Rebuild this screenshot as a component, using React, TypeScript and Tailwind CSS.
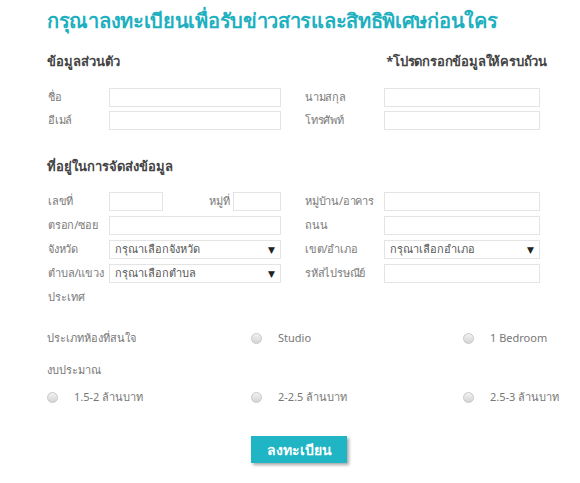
import React from "react";

function Field({ label, w, select }: { label?: string; w: string; select?: string }) {
  return (
    <div className="flex items-center">
      {label !== undefined && (
        <span className="w-[61px] whitespace-nowrap text-[11px] tracking-[-0.2px] text-[#7a7a7a]">{label}</span>
      )}
      <div
        className={`${w} h-[19px] border border-[#e4e4e4] bg-white flex items-center justify-between px-[5px]`}
      >
        {select && (
          <>
            <span className="whitespace-nowrap text-[11px] text-[#555]">{select}</span>
            <span className="text-[9px] text-[#222]">▼</span>
          </>
        )}
      </div>
    </div>
  );
}

function Row({
  left,
  rightLabel,
  rightSelect,
}: {
  left: React.ReactNode;
  rightLabel: string;
  rightSelect?: string;
}) {
  return (
    <div className="flex h-[19px] items-center">
      <div className="w-[233px]">{left}</div>
      <div className="ml-[24px] flex items-center">
        <span className="w-[79px] whitespace-nowrap text-[11px] tracking-[-0.2px] text-[#7a7a7a]">{rightLabel}</span>
        <Field w="w-[156px]" select={rightSelect} />
      </div>
    </div>
  );
}

function Radio({ text, w }: { text: string; w: string }) {
  return (
    <label className={`${w} flex items-center`}>
      <span className="w-[11px] h-[11px] shrink-0 rounded-full border border-[#c8c8c8] bg-gradient-to-b from-[#f2f2f2] to-[#d4d4d4]" />
      <span className="ml-[16px] whitespace-nowrap text-[11px] text-[#777]">{text}</span>
    </label>
  );
}

export default function App() {
  return (
    <div
      className="w-[580px] h-[483px] bg-white pl-[47px]"
      style={{ fontFamily: '"Noto Sans", "DejaVu Sans", sans-serif' }}
    >
      <div className="h-[42px] flex items-center">
        <h1 className="text-[20px] font-bold text-[#1eb0c0] tracking-[-0.3px]">
          กรุณาลงทะเบียนเพื่อรับข่าวสารและสิทธิพิเศษก่อนใคร
        </h1>
      </div>
      <div className="h-[40px] w-[500px] flex items-center justify-between">
        <span className="text-[13px] font-bold text-[#444]">ข้อมูลส่วนตัว</span>
        <span className="text-[13px] font-bold text-[#444] tracking-[-0.2px]">*โปรดกรอกข้อมูลให้ครบถ้วน</span>
      </div>

      <div className="mt-[6px] flex flex-col gap-[4px] pl-[1px]">
        <Row left={<Field label="ชื่อ" w="w-[172px]" />} rightLabel="นามสกุล" />
        <Row left={<Field label="อีเมล์" w="w-[172px]" />} rightLabel="โทรศัพท์" />
      </div>

      <div className="mt-[25px] h-[24px] flex items-center">
        <span className="text-[13px] font-bold text-[#444]">ที่อยู่ในการจัดส่งข้อมูล</span>
      </div>

      <div className="mt-[13px] flex flex-col gap-[5px] pl-[1px]">
        <Row
          left={
            <div className="flex items-center">
              <Field label="เลขที่" w="w-[54px]" />
              <span className="w-[70px] pr-[3px] text-right text-[11px] text-[#7a7a7a]">หมู่ที่</span>
              <Field w="w-[48px]" />
            </div>
          }
          rightLabel="หมู่บ้าน/อาคาร"
        />
        <Row left={<Field label="ตรอก/ซอย" w="w-[172px]" />} rightLabel="ถนน" />
        <Row
          left={<Field label="จังหวัด" w="w-[172px]" select="กรุณาเลือกจังหวัด" />}
          rightLabel="เขต/อำเภอ"
          rightSelect="กรุณาเลือกอำเภอ"
        />
        <Row
          left={<Field label="ตำบล/แขวง" w="w-[172px]" select="กรุณาเลือกตำบล" />}
          rightLabel="รหัสไปรษณีย์"
        />
        <div className="h-[19px] flex items-center">
          <span className="text-[11px] text-[#7a7a7a]">ประเทศ</span>
        </div>
      </div>

      <div className="mt-[21px] h-[20px] flex items-center">
        <span className="w-[204px] text-[11px] text-[#777]">ประเภทห้องที่สนใจ</span>
        <Radio text="Studio" w="w-[212px]" />
        <Radio text="1 Bedroom" w="w-[90px]" />
      </div>

      <div className="mt-[12px] h-[20px] flex items-center">
        <span className="text-[11px] text-[#777]">งบประมาณ</span>
      </div>

      <div className="mt-[7px] h-[20px] flex items-center">
        <Radio text="1.5-2 ล้านบาท" w="w-[204px]" />
        <Radio text="2-2.5 ล้านบาท" w="w-[212px]" />
        <Radio text="2.5-3 ล้านบาท" w="w-[90px]" />
      </div>

      <button className="mt-[29px] ml-[204px] w-[96px] h-[27px] bg-[#1fb5c5] text-white text-[14px] font-bold shadow-[2px_2px_3px_rgba(0,0,0,0.35)]">
        ลงทะเบียน
      </button>
    </div>
  );
}
